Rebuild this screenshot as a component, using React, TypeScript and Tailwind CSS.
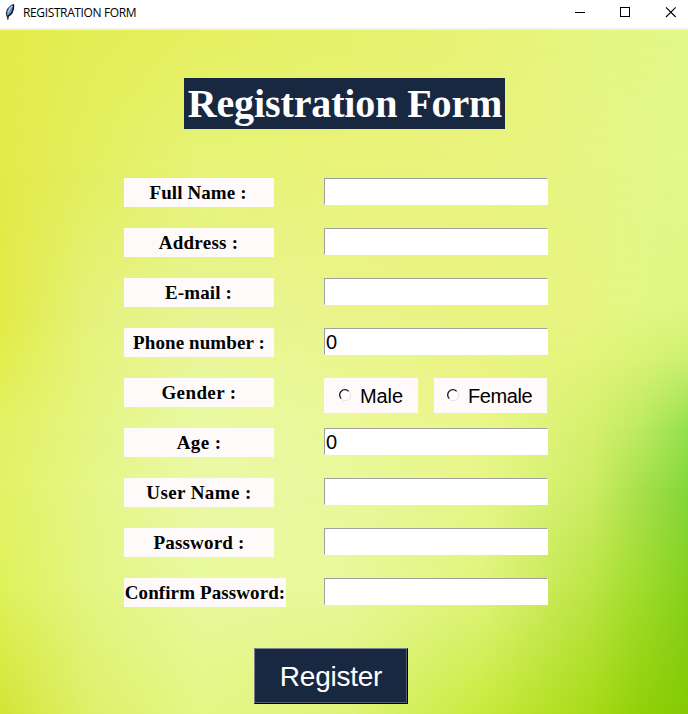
import React from "react";

type Row = { label: string; kind?: "gender"; value?: string; type?: string; box: string };

const rows: Row[] = [
  { label: "Full Name :", box: "w-[150px] pr-[2px] tracking-[0.1px]" },
  { label: "Address :", box: "w-[150px] pr-px tracking-[0.25px]" },
  { label: "E-mail :", box: "w-[150px] pr-px tracking-[0.15px]" },
  { label: "Phone number :", value: "0", box: "w-[150px] tracking-[0.1px]" },
  { label: "Gender :", kind: "gender", box: "w-[150px] tracking-[0.4px]" },
  { label: "Age :", value: "0", box: "w-[150px] tracking-[0.4px]" },
  { label: "User Name :", box: "w-[150px] tracking-[0.4px]" },
  { label: "Password :", type: "password", box: "w-[150px] tracking-[0.2px]" },
  { label: "Confirm Password:", type: "password", box: "w-[162px] tracking-[0.1px]" },
];

// Horizontal colour bands; each one fades in from the band above it.
const bands = [
  "bg-[linear-gradient(90deg,#e3ec4a,#e4ee55_13%,#e6f060_29%,#e6f26c_50%,#e8f376_70%,#e5f682_86%,#e3f785_93%,#e3f887)]",
  "bg-[linear-gradient(90deg,#e3ea48,#e3ef60_13%,#e6f378_29%,#e9f37a_50%,#e9f37e_70%,#e6f583_86%,#e4f788_93%,#e3f88a)] [mask-image:linear-gradient(transparent_0,#000_140px)]",
  "bg-[linear-gradient(90deg,#e2ea45,#e4f27a_13%,#e6f593_29%,#eaf48a_50%,#eaf380_70%,#e7f580_86%,#e2f784_93%,#dff681)] [mask-image:linear-gradient(transparent_140px,#000_280px)]",
  "bg-[linear-gradient(90deg,#e3ee4f,#e5f47d_13%,#e8f79a_29%,#eaf790_50%,#eaf484_70%,#e2f47a_86%,#d9f375_93%,#cbef70)] [mask-image:linear-gradient(transparent_280px,#000_330px)]",
  "bg-[linear-gradient(90deg,#e2f164,#e4f582_13%,#e9f9a4_29%,#eaf898_50%,#eaf68a_70%,#d6f06c_86%,#bcea60_93%,#94e04c)] [mask-image:linear-gradient(transparent_330px,#000_400px)]",
  "bg-[linear-gradient(90deg,#e2f264,#e5f686_13%,#eaf9a6_29%,#e9f89c_50%,#e6f687_70%,#cced64_86%,#a8e04c_93%,#84d63a)] [mask-image:linear-gradient(transparent_400px,#000_460px)]",
  "bg-[linear-gradient(90deg,#def25a,#e3f582_13%,#e8f99c_29%,#e8f89a_50%,#e0f47c_70%,#bbe444_86%,#a0dc2c_93%,#86d01c)] [mask-image:linear-gradient(transparent_460px,#000_560px)]",
  "bg-[linear-gradient(90deg,#d2e436,#ddf06a_13%,#e4f684_29%,#dff37a_50%,#c8ea3c_70%,#a8da18_86%,#92d008_93%,#84ca04)] [mask-image:linear-gradient(transparent_560px,#000_684px)]",
];

function TitleBar() {
  return (
    <header className="flex h-[30px] items-start justify-between border-b-2 border-[#f0f0f0] bg-white">
      <div className="flex items-start pl-1">
        <svg width="12" height="18" viewBox="0 0 12 18" className="mt-[3px]">
          <path d="M9.6 1.5 C6 2.5 2.8 6 2.4 10 L2.9 13.5 C6.5 12.5 9.3 9 9.6 1.5 Z" fill="#5b92cf" stroke="#222" strokeWidth="1" />
          <path d="M9.6 1.8 C9.6 8 7 12 4 13.4 L3.8 16.5" fill="none" stroke="#111" strokeWidth="1.4" />
          <path d="M8.3 3 C6.3 4.5 4.8 7 4.2 9.5" fill="none" stroke="#a9d4fa" strokeWidth="1.3" />
        </svg>
        <span className="ml-[7px] mt-[4px] whitespace-nowrap font-['Open_Sans','Noto_Sans',sans-serif] text-[12px] leading-[17px] tracking-[-0.37px] text-black">
          REGISTRATION FORM
        </span>
      </div>
      <svg width="128" height="28" viewBox="0 0 128 28" fill="none" stroke="#000" shapeRendering="crispEdges">
        <path d="M15 12.5H25" />
        <rect x="60.5" y="7.5" width="9" height="9" />
        <path d="M106 7.3L115.7 17M115.7 7.3L106 17" shapeRendering="auto" strokeWidth="1.1" />
      </svg>
    </header>
  );
}

function Radio({ label, box, text }: { label: string; box: string; text: string }) {
  return (
    <label className={`flex h-[35px] items-center bg-[#fffafa] ${box}`}>
      <svg width="12" height="12" viewBox="0 0 12 12" className="mb-px shrink-0">
        <circle cx="6" cy="6" r="5.5" fill="#fff" />
        <path d="M10 2A5.4 5.4 0 0 1 2 10" fill="none" stroke="#e3e3e3" strokeWidth="1" />
        <path d="M2.2 9.6A5 5 0 0 1 9.6 2.2" fill="none" stroke="#111" strokeWidth="1.3" />
      </svg>
      <span className={`ml-[9px] font-['Liberation_Sans',Arial,sans-serif] text-[20px] leading-6 text-black ${text}`}>{label}</span>
    </label>
  );
}

export default function App() {
  return (
    <div className="flex h-[714px] w-[688px] flex-col overflow-hidden">
      <TitleBar />
      <main className="relative flex-1">
        {bands.map((band) => (
          <div key={band} className={`absolute inset-0 ${band}`} />
        ))}
        <form className="relative flex flex-col">
          <h1 className="ml-[184px] mt-[48px] flex h-[51px] w-[321px] items-center justify-center whitespace-nowrap bg-[#192841] font-['Liberation_Serif','Times_New_Roman',serif] text-[40px] font-bold leading-[51px] text-white">
            <span className="pl-px tracking-[-0.12px]">Registration Form</span>
          </h1>
          <div className="ml-[124px] mt-[49px] flex flex-col">
            {rows.map((row) => (
              <div key={row.label} className="flex h-[50px] items-start">
                <div className="w-[200px]">
                  <div className={`flex h-[29px] items-center justify-center whitespace-nowrap bg-[#fffafa] pt-[2px] font-['Liberation_Serif','Times_New_Roman',serif] text-[19px] font-bold text-black ${row.box}`}>
                    {row.label}
                  </div>
                </div>
                {row.kind === "gender" ? (
                  <div className="flex gap-4">
                    <Radio label="Male" box="w-[94px] pl-[15px]" text="tracking-[-0.1px]" />
                    <Radio label="Female" box="w-[113px] pl-[13px]" text="tracking-[-0.4px]" />
                  </div>
                ) : (
                  <input
                    type={row.type ?? "text"}
                    defaultValue={row.value}
                    className="h-[27px] w-[224px] border border-b-white border-l-[#a0a0a0] border-r-white border-t-[#a0a0a0] bg-white pl-[1px] pt-px font-['Liberation_Sans',Arial,sans-serif] text-[20px] leading-6 text-black outline-none"
                  />
                )}
              </div>
            ))}
          </div>
          <button
            type="button"
            className="ml-[254px] mt-[20px] flex h-[56px] w-[154px] items-center justify-center border border-b-black border-l-[#7b828e] border-r-black border-t-[#7b828e] bg-[#192841] pt-px font-['Liberation_Sans',Arial,sans-serif] text-[28px] tracking-[-0.25px] text-white shadow-[inset_-1px_-1px_0_#535e70]"
          >
            Register
          </button>
        </form>
      </main>
    </div>
  );
}
